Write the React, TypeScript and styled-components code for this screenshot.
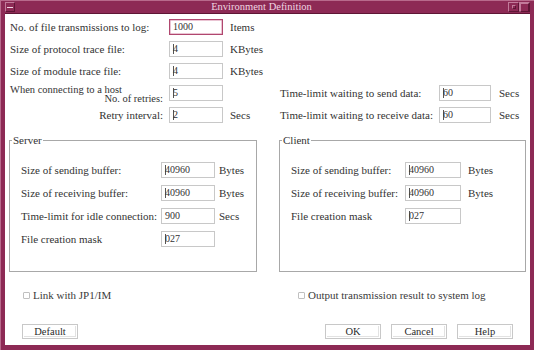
import React from "react";
import styled, { createGlobalStyle } from "styled-components";

const GlobalStyle = createGlobalStyle`
  html, body {
    margin: 0;
    padding: 0;
    background: #ffffff;
  }
  * {
    box-sizing: border-box;
  }
`;

const Frame = styled.div`
  width: 534px;
  height: 350px;
  background: #8d2a55;
  padding: 0 4px 5px 4px;
  display: flex;
  flex-direction: column;
  font-family: "Liberation Serif", "DejaVu Serif", serif;
  font-size: 11px;
  color: #333333;
  border-top: 1px solid #b86a8c;
  border-left: 1px solid #b86a8c;
`;

const TitleBar = styled.div`
  height: 13px;
  display: flex;
  align-items: stretch;
  border-bottom: 1px solid #5e1535;
`;

const MenuBtn = styled.div`
  width: 10px;
  margin: 1px 0;
  border: 1px solid #c27a9a;
  border-right-color: #5e1535;
  border-bottom-color: #5e1535;
  display: flex;
  align-items: center;
  justify-content: center;

  &::after {
    content: "";
    width: 6px;
    height: 1px;
    background: #f2d9e4;
  }
`;

const Title = styled.div`
  flex: 1;
  text-align: center;
  line-height: 12px;
  color: #f0d6e2;
  font-size: 10.5px;
`;

const WinBtn = styled.div<{ $small?: boolean }>`
  width: 11px;
  margin: 1px 0 1px 0;
  border: 1px solid #c27a9a;
  border-right-color: #5e1535;
  border-bottom-color: #5e1535;
  display: flex;
  align-items: center;
  justify-content: center;

  &::after {
    content: "";
    width: ${(p) => (p.$small ? "2px" : "7px")};
    height: ${(p) => (p.$small ? "2px" : "7px")};
    border: 1px solid #c27a9a;
    border-right-color: #5e1535;
    border-bottom-color: #5e1535;
  }
`;

const Body = styled.div`
  flex: 1;
  background: #ffffff;
  padding: 5px 0 0 0;
  display: flex;
  flex-direction: column;
`;

const Row = styled.div`
  display: flex;
  align-items: center;
  height: 16px;
  margin-bottom: 6px;
`;

const Label = styled.div<{ $w: number }>`
  width: ${(p) => p.$w}px;
  flex: none;
  white-space: nowrap;
  line-height: 16px;
`;

const RightLabel = styled(Label)`
  text-align: right;
  padding-right: 6px;
`;

const Field = styled.div<{ $w: number; $focus?: boolean }>`
  width: ${(p) => p.$w}px;
  height: 16px;
  flex: none;
  border: 1px solid ${(p) => (p.$focus ? "#b0476f" : "#c8c8c8")};
  ${(p) => (p.$focus ? "box-shadow: inset 0 0 0 0.5px #d68aa8;" : "")}
  padding-left: 3px;
  display: flex;
  align-items: center;
  font-size: 10px;
  line-height: 12px;
`;

const Caret = styled.span`
  display: inline-block;
  width: 1px;
  height: 10px;
  background: #555;
  margin-right: -1px;
`;

const Unit = styled.div<{ $gap: number }>`
  margin-left: ${(p) => p.$gap}px;
  white-space: nowrap;
`;

const Section = styled.div`
  padding-left: 5px;
`;

const Conn = styled.div`
  display: flex;
  padding-left: 5px;
`;

const Column = styled.div<{ $w?: number }>`
  width: ${(p) => (p.$w ? `${p.$w}px` : "auto")};
  display: flex;
  flex-direction: column;
`;

const StackLabel = styled.div`
  width: 159px;
  height: 16px;
  display: flex;
  flex-direction: column;
  line-height: 9px;
  font-size: 10.5px;
  margin-top: -1px;
`;

const StackRight = styled.div`
  text-align: right;
  padding-right: 6px;
`;

const Groups = styled.div`
  display: flex;
  margin-top: 11px;
  padding-left: 4px;
  gap: 22px;
`;

const GroupBox = styled.fieldset<{ $w: number }>`
  width: ${(p) => p.$w}px;
  height: 132px;
  margin: 0;
  border: 1px solid #a8a8a8;
  padding: 21px 0 0 11px;
  position: relative;
`;

const Legend = styled.legend`
  position: absolute;
  top: -7px;
  left: 2px;
  padding: 0 1px;
  background: #ffffff;
  line-height: 12px;
`;

const GroupRow = styled(Row)`
  margin-bottom: 7px;
`;

const Checks = styled.div`
  display: flex;
  margin-top: 17px;
`;

const CheckItem = styled.label<{ $left: number; $w?: number }>`
  margin-left: ${(p) => p.$left}px;
  ${(p) => (p.$w ? `width: ${p.$w}px;` : "")}
  display: flex;
  align-items: center;
  gap: 3px;
  line-height: 12px;
  color: #3a3a3a;
`;

const Box = styled.span`
  width: 7px;
  height: 7px;
  border: 1px solid #c0c0c0;
  border-radius: 1px;
`;

const Buttons = styled.div`
  display: flex;
  margin-top: 23px;
  padding-left: 17px;
`;

const Button = styled.div<{ $ml?: number }>`
  width: 56px;
  height: 15px;
  margin-left: ${(p) => p.$ml ?? 0}px;
  border: 1px solid #c8c8c8;
  box-shadow: inset 0 0 0 1px #ffffff, inset -1px -1px 0 1px #e2e2e2;
  text-align: center;
  line-height: 13px;
  font-size: 10.5px;
  color: #2a2a2a;
`;

type FieldProps = { value: string; w: number; caret?: boolean; focus?: boolean };

const Input = ({ value, w, caret, focus }: FieldProps) => (
  <Field $w={w} $focus={focus}>
    {caret && <Caret />}
    {value}
  </Field>
);

export default function App() {
  return (
    <>
      <GlobalStyle />
      <Frame>
        <TitleBar>
          <MenuBtn />
          <Title>Environment Definition</Title>
          <WinBtn $small />
          <WinBtn />
        </TitleBar>
        <Body>
          <Section>
            <Row>
              <Label $w={159}>No. of file transmissions to log:</Label>
              <Input value="1000" w={54} focus />
              <Unit $gap={7}>Items</Unit>
            </Row>
            <Row>
              <Label $w={159}>Size of protocol trace file:</Label>
              <Input value="4" w={54} caret />
              <Unit $gap={7}>KBytes</Unit>
            </Row>
            <Row>
              <Label $w={159}>Size of module trace file:</Label>
              <Input value="4" w={54} caret />
              <Unit $gap={7}>KBytes</Unit>
            </Row>
          </Section>
          <Conn>
            <Column $w={270}>
              <Row>
                <StackLabel>
                  <div>When connecting to a host</div>
                  <StackRight>No. of retries:</StackRight>
                </StackLabel>
                <Input value="5" w={54} caret />
              </Row>
              <Row>
                <RightLabel $w={159}>Retry interval:</RightLabel>
                <Input value="2" w={54} caret />
                <Unit $gap={7}>Secs</Unit>
              </Row>
            </Column>
            <Column>
              <Row>
                <Label $w={159}>Time-limit waiting to send data:</Label>
                <Input value="60" w={52} caret />
                <Unit $gap={8}>Secs</Unit>
              </Row>
              <Row>
                <Label $w={159}>Time-limit waiting to receive data:</Label>
                <Input value="60" w={52} caret />
                <Unit $gap={8}>Secs</Unit>
              </Row>
            </Column>
          </Conn>
          <Groups>
            <GroupBox $w={248}>
              <Legend>Server</Legend>
              <GroupRow>
                <Label $w={140}>Size of sending buffer:</Label>
                <Input value="40960" w={54} caret />
                <Unit $gap={4}>Bytes</Unit>
              </GroupRow>
              <GroupRow>
                <Label $w={140}>Size of receiving buffer:</Label>
                <Input value="40960" w={54} caret />
                <Unit $gap={4}>Bytes</Unit>
              </GroupRow>
              <GroupRow>
                <Label $w={140}>Time-limit for idle connection:</Label>
                <Input value="900" w={54} />
                <Unit $gap={4}>Secs</Unit>
              </GroupRow>
              <GroupRow>
                <Label $w={140}>File creation mask</Label>
                <Input value="027" w={54} caret />
              </GroupRow>
            </GroupBox>
            <GroupBox $w={247}>
              <Legend>Client</Legend>
              <GroupRow>
                <Label $w={114}>Size of sending buffer:</Label>
                <Input value="40960" w={56} caret />
                <Unit $gap={7}>Bytes</Unit>
              </GroupRow>
              <GroupRow>
                <Label $w={114}>Size of receiving buffer:</Label>
                <Input value="40960" w={56} caret />
                <Unit $gap={7}>Bytes</Unit>
              </GroupRow>
              <GroupRow>
                <Label $w={114}>File creation mask</Label>
                <Input value="027" w={56} caret />
              </GroupRow>
            </GroupBox>
          </Groups>
          <Checks>
            <CheckItem $left={18} $w={275}>
              <Box />
              Link with JP1/IM
            </CheckItem>
            <CheckItem $left={0}>
              <Box />
              Output transmission result to system log
            </CheckItem>
          </Checks>
          <Buttons>
            <Button>Default</Button>
            <Button $ml={247}>OK</Button>
            <Button $ml={10}>Cancel</Button>
            <Button $ml={10}>Help</Button>
          </Buttons>
        </Body>
      </Frame>
    </>
  );
}
